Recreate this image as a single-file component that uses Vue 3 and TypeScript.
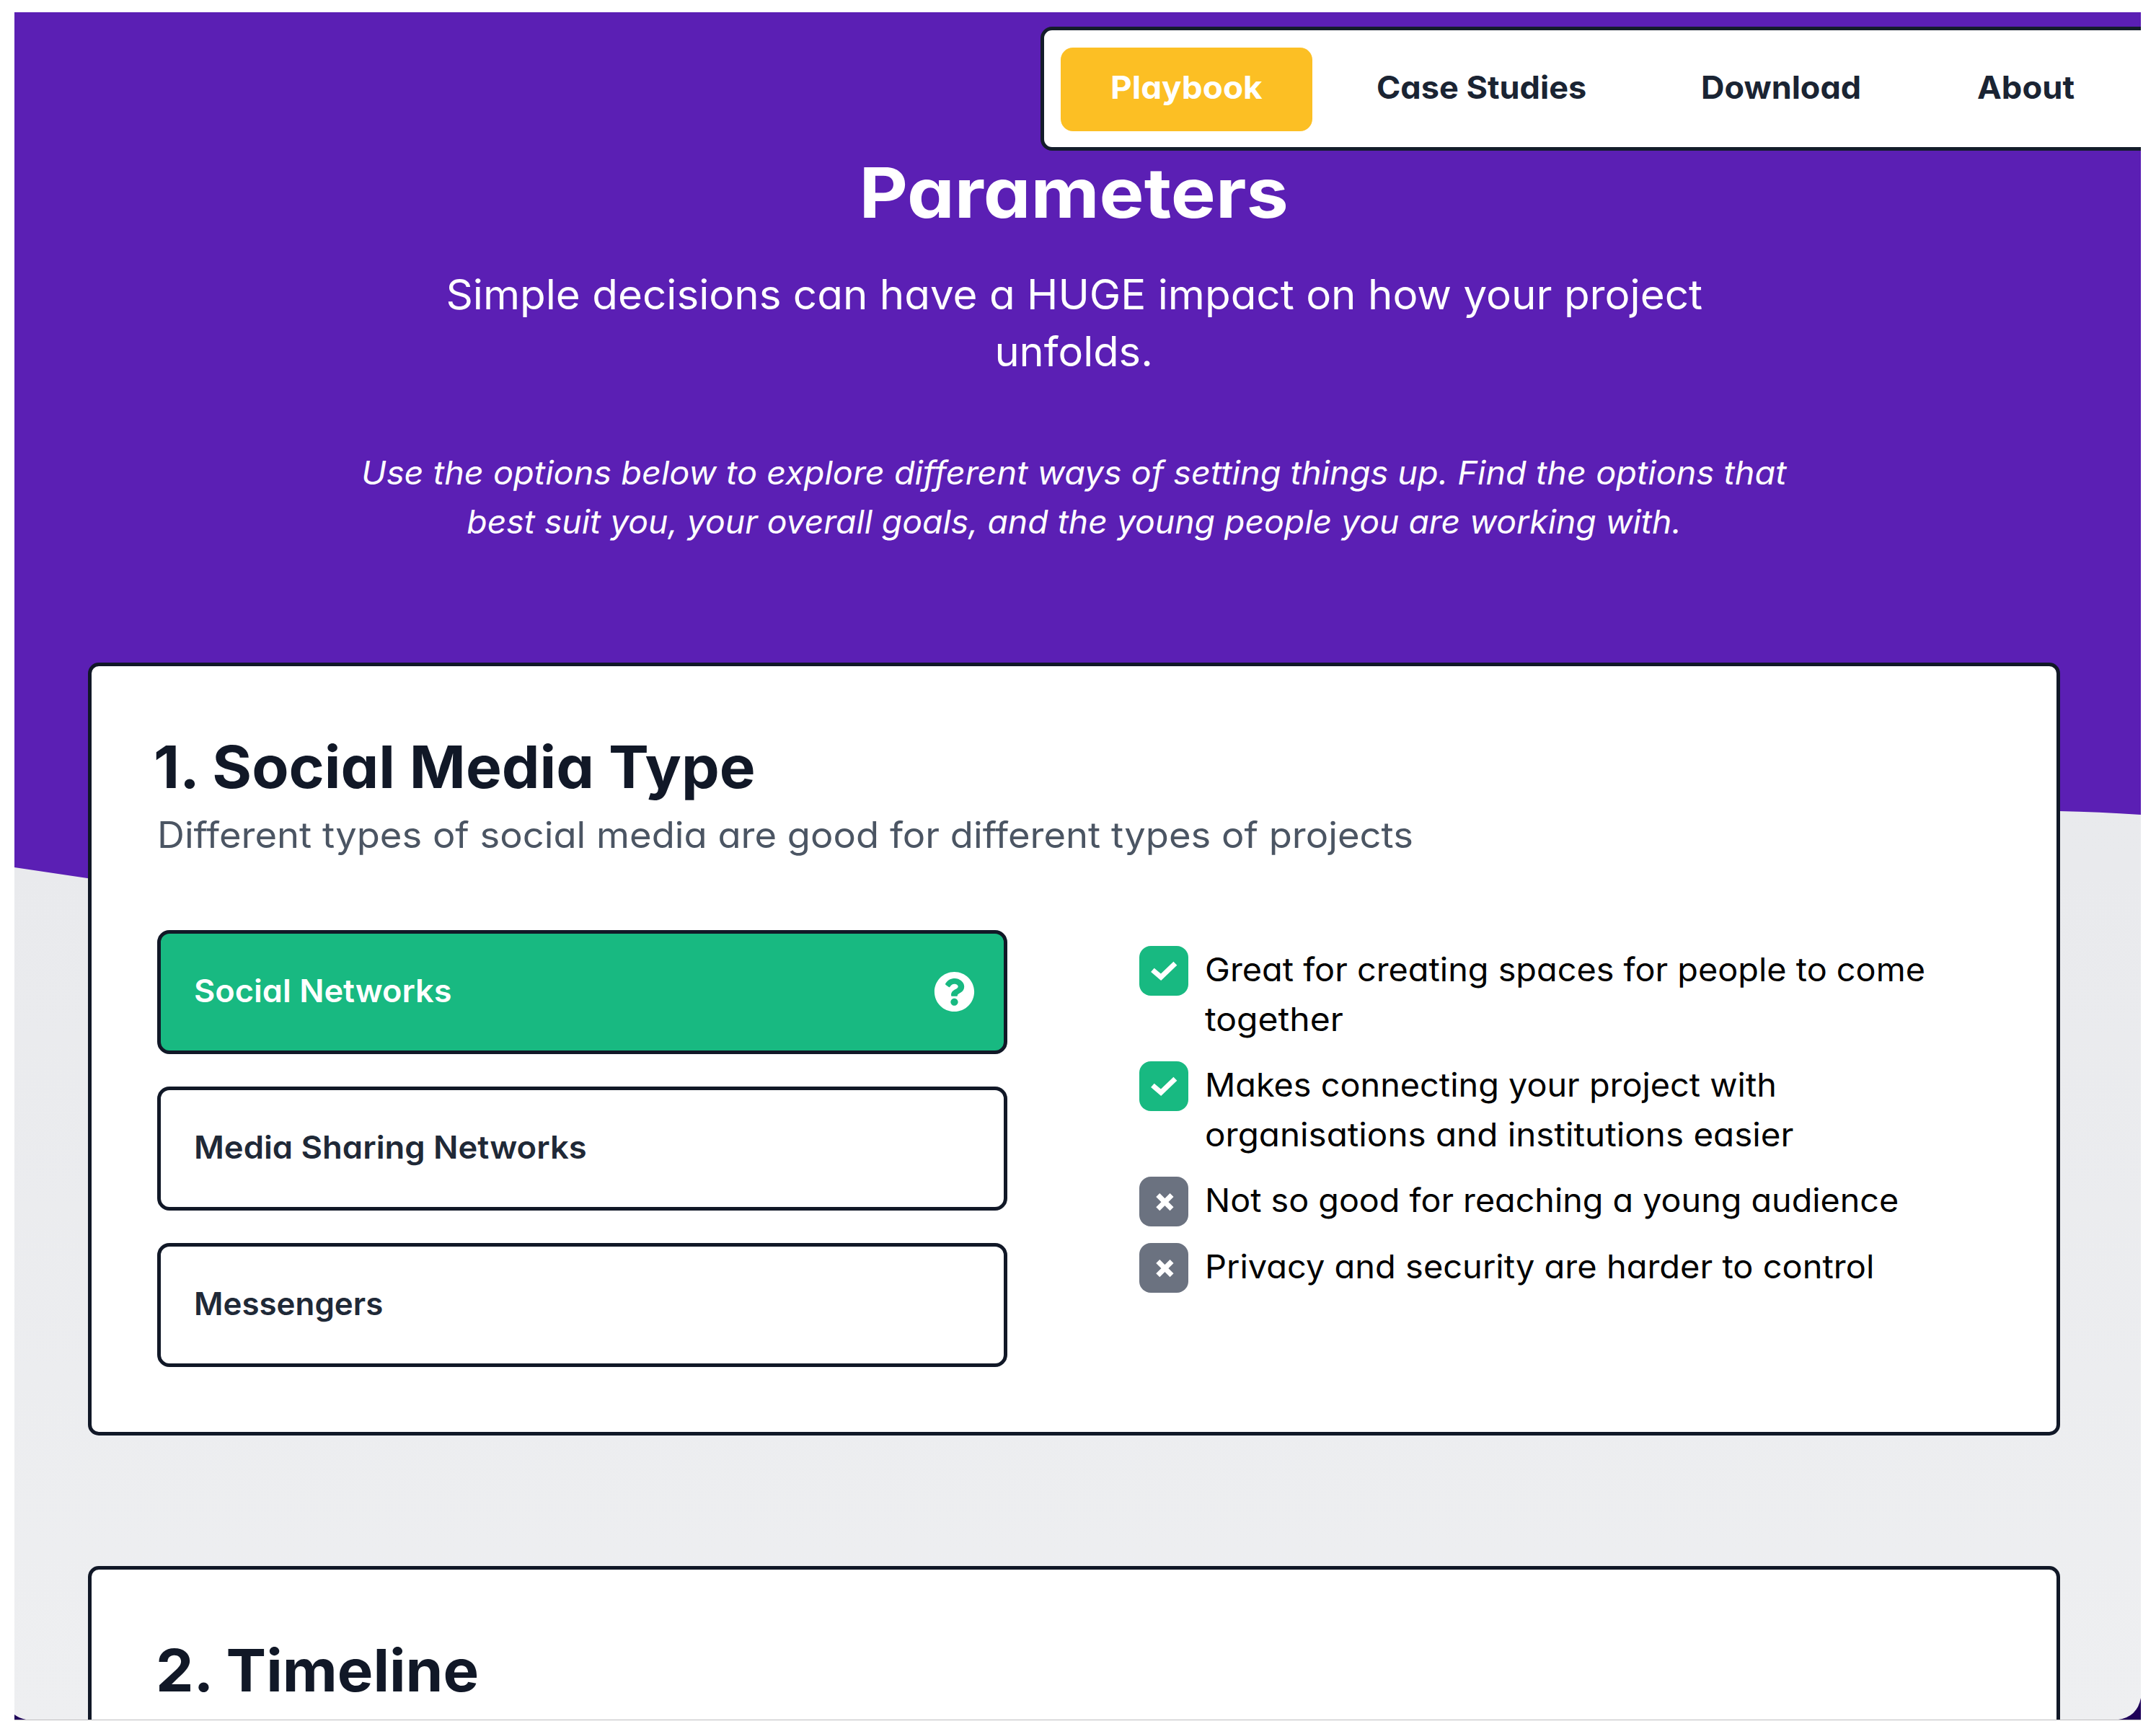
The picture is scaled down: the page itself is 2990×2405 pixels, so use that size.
<script setup lang="ts">
interface Line { text: string; stretch: number }
interface Feature { good: boolean; lines: Line[] }

const navItems = [
  { label: 'Playbook', stretch: 1.043, cls: 'active' },
  { label: 'Case Studies', stretch: 1.024, cls: 'case' },
  { label: 'Download', stretch: 1.022, cls: 'download' },
  { label: 'About', stretch: 1.03, cls: 'about' },
]
const lead: Line[] = [
  { text: 'Simple decisions can have a HUGE impact on how your project', stretch: 1.023 },
  { text: 'unfolds.', stretch: 1.015 },
]
const hint: Line[] = [
  { text: 'Use the options below to explore different ways of setting things up. Find the options that', stretch: 1.041 },
  { text: 'best suit you, your overall goals, and the young people you are working with.', stretch: 1.029 },
]
const options = [
  { text: 'Social Networks', stretch: 1.025, active: true },
  { text: 'Media Sharing Networks', stretch: 1.031, active: false },
  { text: 'Messengers', stretch: 0.997, active: false },
]
const features: Feature[] = [
  {
    good: true,
    lines: [
      { text: 'Great for creating spaces for people to come', stretch: 1.04 },
      { text: 'together', stretch: 1.068 },
    ],
  },
  {
    good: true,
    lines: [
      { text: 'Makes connecting your project with', stretch: 1.04 },
      { text: 'organisations and institutions easier', stretch: 1.057 },
    ],
  },
  { good: false, lines: [{ text: 'Not so good for reaching a young audience', stretch: 1.037 }] },
  { good: false, lines: [{ text: 'Privacy and security are harder to control', stretch: 1.044 }] },
]
const wide = (n: number) => ({ transform: `scaleX(${n})` })
</script>

<template>
  <main class="page">
    <svg class="backdrop" viewBox="0 0 2949 2368" aria-hidden="true">
      <path d="M0 0H2949V1113Q2890 1109 2836 1108C2000 1100 800 1310 101 1201L0 1186Z" fill="#5b1fb4" />
      <path d="M2918 2368Q2944 2364 2949 2338V2368ZM0 2361Q6 2366 16 2368H0Z" fill="#1e0059" />
    </svg>
    <nav class="nav">
      <a v-for="n in navItems" :key="n.label" class="tab" :class="n.cls"><span class="t" :style="wide(n.stretch)">{{ n.label }}</span></a>
    </nav>

    <header class="hero">
      <h1><span class="t" :style="wide(1.086)">Parameters</span></h1>
      <p class="lead"><span v-for="l in lead" :key="l.text" class="line"><span class="t" :style="wide(l.stretch)">{{ l.text }}</span></span></p>
      <p class="hint"><span v-for="l in hint" :key="l.text" class="line"><span class="t" :style="wide(l.stretch)">{{ l.text }}</span></span></p>
    </header>

    <section class="card">
      <h2 class="first"><span class="t" :style="wide(1.034)">1. Social Media Type</span></h2>
      <p class="sub"><span class="t" :style="wide(1.05)">Different types of social media are good for different types of projects</span></p>
      <div class="cols">
        <div class="options">
          <button v-for="o in options" :key="o.text" class="option" :class="{ on: o.active }">
            <span class="t" :style="wide(o.stretch)">{{ o.text }}</span>
            <svg v-if="o.active" class="help" viewBox="0 0 512 512"><path fill="#fff" d="M504 256c0 137-111 248-248 248S8 393 8 256 119 8 256 8s248 111 248 248zM262.700 90c-54.500 0-89.300 23-116.500 63.800-3.500 5.300-2.400 12.400 2.700 16.300l34.700 26.300c5.200 3.900 12.600 3 16.700-2.100 17.900-22.700 30.100-35.800 57.300-35.800 20.400 0 45.700 13.100 45.700 33 0 15-12.400 22.700-32.500 34C247.100 238.500 216 254.900 216 296v4c0 6.600 5.400 12 12 12h56c6.600 0 12-5.400 12-12v-1.300c0-28.500 83.200-29.600 83.200-106.700 0-58-60.200-102-116.500-102zM256 338c-25.400 0-46 20.600-46 46s20.600 46 46 46 46-20.600 46-46-20.600-46-46-46z" /></svg>
          </button>
        </div>
        <ul class="features">
          <li v-for="(f, i) in features" :key="i">
            <span class="badge" :class="{ good: f.good }">
              <svg v-if="f.good" viewBox="0 0 24 24"><path d="M6.500 11.600l4.100 3.500 7-6.700" /></svg>
              <svg v-else viewBox="0 0 24 24"><path d="M9.100 8.800l6.800 6.800M15.900 8.800l-6.800 6.800" /></svg>
            </span>
            <span class="copy"><span v-for="l in f.lines" :key="l.text" class="line"><span class="t" :style="wide(l.stretch)">{{ l.text }}</span></span></span>
          </li>
        </ul>
      </div>
    </section>

    <section class="card next">
      <h2><span class="t" :style="wide(1.029)">2. Timeline</span></h2>
    </section>
  </main>
</template>

<style>
body { background: #fff; }
</style>

<style scoped>
.page {
  position: relative;
  box-sizing: border-box;
  width: 2949px;
  height: 2369px;
  margin: 17px 0 0 20px;
  overflow: hidden;
  border-bottom: 1px solid #bdbdbf;
  background: linear-gradient(#e7e9ec, #e9eaed 50%, #eeeff1);
  font-family: Inter, 'Open Sans', sans-serif;
  font-feature-settings: 'cv11';
  white-space: nowrap;
}
.t { display: inline-block; transform-origin: left center; }
.backdrop { position: absolute; left: 0; top: 0; width: 2949px; height: 2368px; }
.nav {
  position: absolute; left: 1423px; top: 20px; z-index: 2;
  box-sizing: border-box; width: 1600px; height: 172px; padding: 24px 22px;
  display: flex; border: 5px solid #141d2b; border-radius: 16px; background: #fff;
}
.tab {
  height: 116px; box-sizing: border-box; padding: 0 70px;
  font-size: 44px; font-weight: 700; line-height: 111px; color: #1a2433;
}
.tab.active { width: 349px; margin-left: 1px; padding-left: 69px; border-radius: 17px; background: #fcbf24; color: #fff; }
.tab.case { margin-left: 19px; }
.tab.download { margin-left: 26px; }
.tab.about { margin-left: 25px; }
h1, h2, p, ul { margin: 0; padding: 0; }
.line { display: block; }
.hero { position: relative; width: 2939px; padding-top: 200px; text-align: center; color: #fff; }
.hero .t { transform-origin: center; }
h1 { font-size: 96px; line-height: 100px; font-weight: 700; }
.lead { margin-top: 52px; font-size: 57px; line-height: 79px; }
.hint { margin-top: 95px; font-size: 45px; line-height: 68px; font-style: italic; }
.card {
  position: relative; box-sizing: border-box; width: 2735px; height: 1072px; margin: 161px 0 0 102px;
  padding: 95px 91px 0; border: 5px solid #111827; border-radius: 15px; background: #fff;
}
.next { margin-top: 181px; height: 400px; }
h2 { margin-left: -2px; font-size: 81px; line-height: 90px; font-weight: 700; color: #111827; }
h2.first { margin-left: -5px; }
.sub { margin-top: 14px; font-size: 50px; line-height: 70px; color: #4b5563; }
.cols { display: flex; margin-top: 97px; }
.options { display: flex; flex-direction: column; gap: 45px; width: 1179px; }
.option {
  display: flex; align-items: center; justify-content: space-between; box-sizing: border-box;
  height: 172px; padding: 0 40px 4px 46px; border: 5px solid #111827; border-radius: 17px;
  background: #fff; color: #1f2937; font: inherit; font-feature-settings: inherit; font-size: 44px; font-weight: 600;
}
.option.on { background: #18b981; color: #fff; }
.help { width: 57px; height: 57px; margin-top: 2px; }
.features { display: flex; flex-direction: column; gap: 23px; margin-left: 183px; padding-top: 22px; list-style: none; }
.features li { display: flex; gap: 23px; font-size: 45px; line-height: 68.500px; color: #000; }
.copy { margin-top: -1px; margin-bottom: 1px; }
.badge { flex: none; width: 68px; height: 69px; border-radius: 16px; background: #6b7280; }
.badge.good { background: #18b981; }
.badge svg { display: block; width: 68px; height: 69px; fill: none; stroke: #fff; stroke-width: 2.500; }
</style>
